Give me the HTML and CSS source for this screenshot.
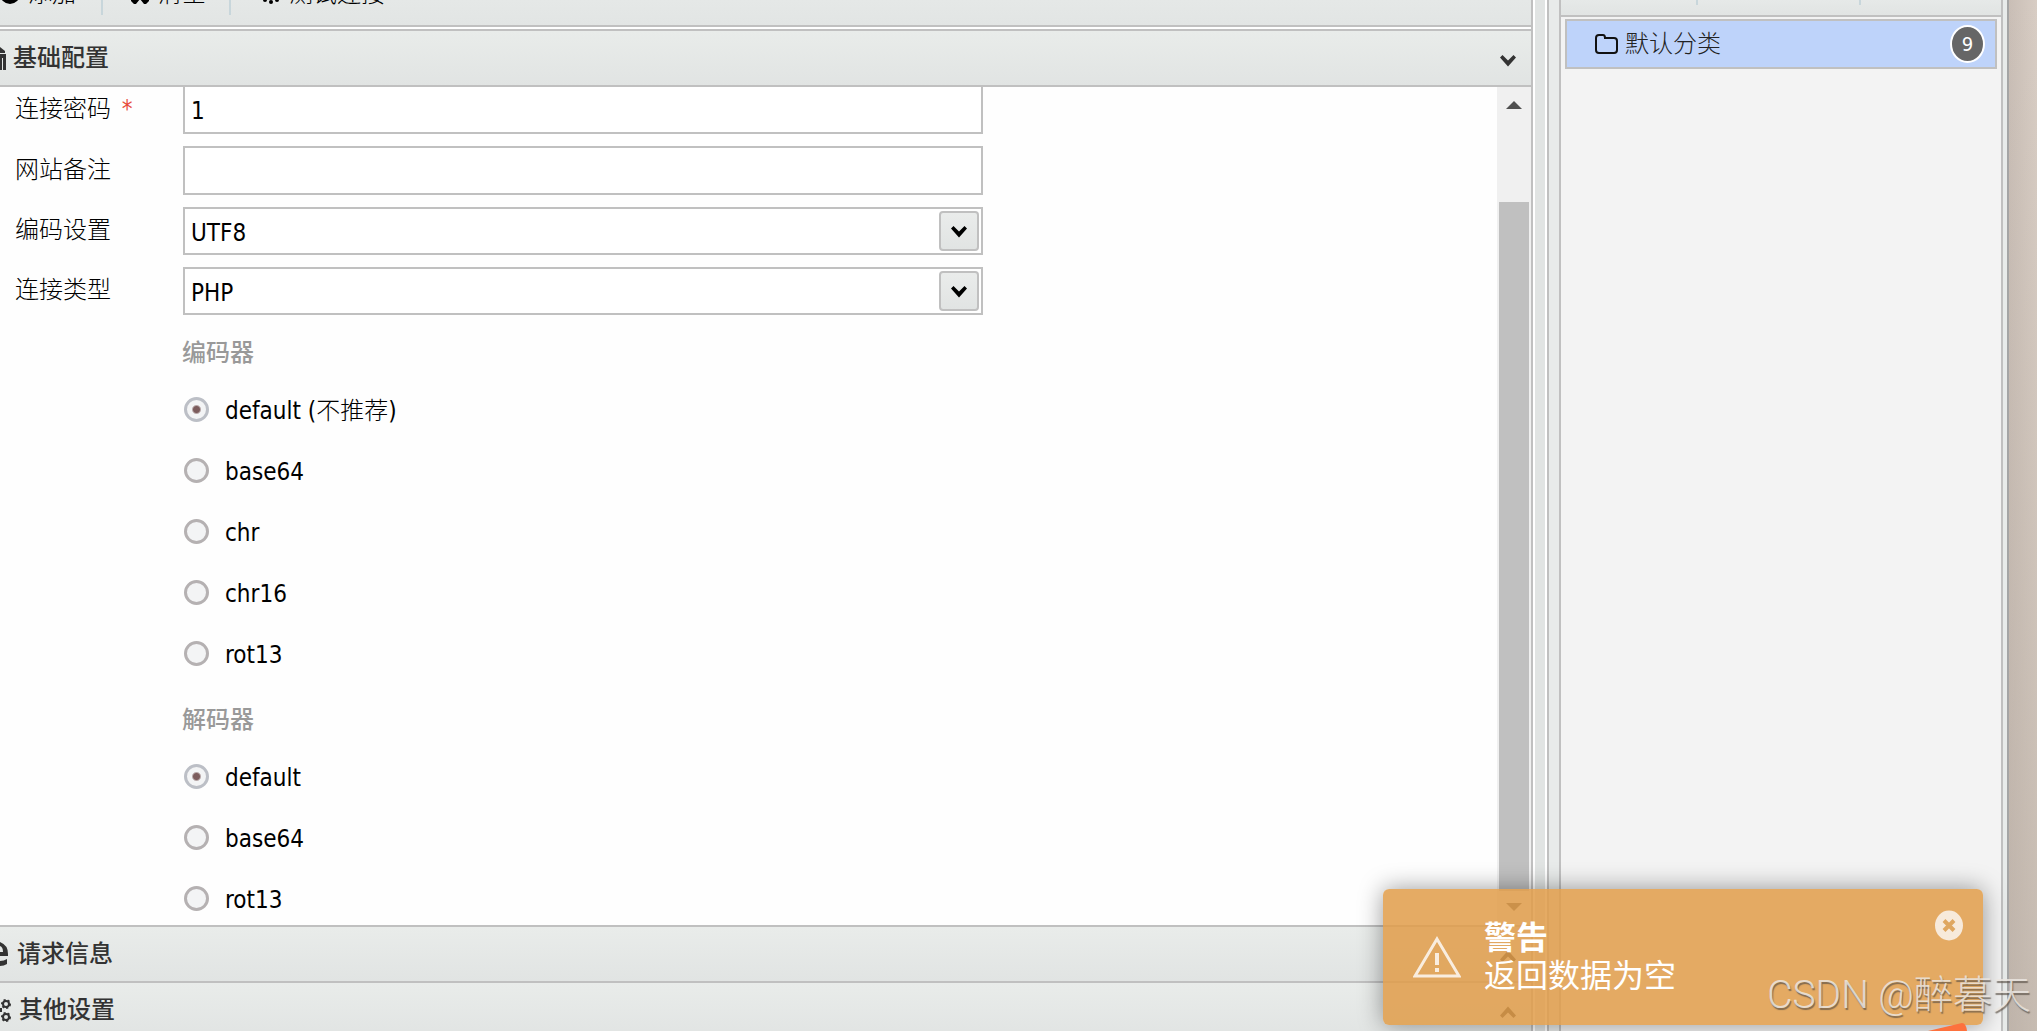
FILE: index.html
```html
<!DOCTYPE html>
<html lang="zh-CN">
<head>
<meta charset="utf-8">
<title>基础配置</title>
<link rel="stylesheet" href="styles.css">
</head>
<body>
<svg class="defs" aria-hidden="true">
  <symbol id="down" viewBox="0 0 18 13"><path d="M1 3.500 3.500 1 9 6.500 14.500 1 17 3.500 9 12.500z"/></symbol>
  <symbol id="up" viewBox="0 0 18 13"><path d="M1 9.500 3.500 12 9 6.500 14.500 12 17 9.500 9 .5z"/></symbol>
</svg>
<div class="window">
  <main class="main">
    <div class="toolbar">
      <button class="tool tool-add" type="button"><svg class="tool-icon" viewBox="0 0 20 20"><path fill-rule="evenodd" d="M10 0a10 10 0 1 0 0 20a10 10 0 0 0 0-20zM8 4h4v4h4v4h-4v4h-4v-4h-4v-4h4z"/></svg>添加</button>
      <span class="sep"></span>
      <button class="tool tool-clear" type="button"><svg class="tool-icon" viewBox="0 0 20 20"><path d="M3 1 10 7 17 1 20 4 14 10 19 15v2l-3 3h-2l-4-5-4 5H4l-3-3v-2l5-5L0 4z"/></svg>清空</button>
      <span class="sep"></span>
      <button class="tool tool-test" type="button"><svg class="tool-icon" viewBox="0 0 20 20"><circle cx="10" cy="2" r="2"/><circle cx="2" cy="10" r="2"/><circle cx="18" cy="10" r="2"/><circle cx="4" cy="16" r="2"/><circle cx="16" cy="16" r="2"/><circle cx="10" cy="18" r="2"/></svg>测试连接</button>
    </div>
    <section class="accordion">
      <button class="head" type="button"><svg class="head-icon" viewBox="0 0 6 24"><path d="M0 1 5 5v2H0zM0 8h6v16H3V12H2v12H0z"/></svg><span class="head-title">基础配置</span><svg class="chev"><use href="#down"/></svg></button>
      <div class="body">
        <form class="form">
          <div class="row"><label for="pwd">连接密码 <span class="star">*</span></label><input class="field" id="pwd" type="text" value="1"></div>
          <div class="row"><label for="note">网站备注</label><input class="field" id="note" type="text"></div>
          <div class="row"><label for="enc">编码设置</label><div class="combo"><select id="enc"><option>UTF8</option></select><span class="drop"><svg class="chev"><use href="#down"/></svg></span></div></div>
          <div class="row"><label for="type">连接类型</label><div class="combo"><select id="type"><option>PHP</option></select><span class="drop"><svg class="chev"><use href="#down"/></svg></span></div></div>
          <fieldset class="group">
            <legend>编码器</legend>
            <label class="option"><input type="radio" name="encoder" checked><span>default (不推荐)</span></label>
            <label class="option"><input type="radio" name="encoder"><span>base64</span></label>
            <label class="option"><input type="radio" name="encoder"><span>chr</span></label>
            <label class="option"><input type="radio" name="encoder"><span>chr16</span></label>
            <label class="option"><input type="radio" name="encoder"><span>rot13</span></label>
          </fieldset>
          <fieldset class="group">
            <legend>解码器</legend>
            <label class="option"><input type="radio" name="decoder" checked><span>default</span></label>
            <label class="option"><input type="radio" name="decoder"><span>base64</span></label>
            <label class="option"><input type="radio" name="decoder"><span>rot13</span></label>
          </fieldset>
        </form>
        <div class="scroll">
          <svg class="arrow" viewBox="0 0 16 8"><path d="M0 8 8 0l8 8z"/></svg>
          <span class="thumb"></span>
          <svg class="arrow" viewBox="0 0 16 8"><path d="M0 0h16L8 8z"/></svg>
        </div>
      </div>
      <button class="head" type="button"><svg class="head-icon wide" viewBox="0 0 8 24"><path d="M0 0Q8 3 8 12v2H0v-4h3Q3 5 0 4zM0 19q4 0 7-2v5q-3 2-7 2z"/></svg><span class="head-title">请求信息</span><svg class="chev"><use href="#up"/></svg></button>
      <button class="head" type="button"><svg class="head-icon gears" viewBox="0 0 11 24"><g fill="none" stroke="#333"><circle cx="6" cy="6" r="3" stroke-width="2"/><circle cx="6" cy="6" r="4" stroke-width="2" stroke-dasharray="2 2"/><circle cx="6" cy="19" r="3" stroke-width="2"/><circle cx="6" cy="19" r="4" stroke-width="2" stroke-dasharray="2 2"/></g><path d="M0 10h2v4H0z"/></svg><span class="head-title">其他设置</span><svg class="chev"><use href="#up"/></svg></button>
    </section>
  </main>
  <div class="splitter"></div>
  <div class="side-pane">
    <aside class="side">
      <div class="side-bar"><span class="side-sep"></span><span class="side-sep"></span></div>
      <a class="category" href="#"><svg class="folder" viewBox="0 0 24 20"><path d="M4 1h4q2 0 2 3h9q3 0 3 3v9q0 3-3 3H4q-3 0-3-3V4q0-3 3-3z"/></svg><span class="category-name">默认分类</span><span class="badge">9</span></a>
    </aside>
  </div>
</div>
<div class="toast" role="alert">
  <svg class="warn" viewBox="0 0 48 42"><path d="M24 3 46 40H2z" fill="none" stroke="#fff" stroke-width="3"/><path d="M22 17h4v12h-4zM22 32h4v4h-4z" fill="#fff"/></svg>
  <div class="toast-text"><strong>警告</strong><span>返回数据为空</span></div>
  <button class="close" type="button" aria-label="关闭"><svg viewBox="0 0 28 30"><ellipse cx="14" cy="15" rx="14" ry="15"/><path d="M9 10 19 20M19 10 9 20"/></svg></button>
</div>
<svg class="corner" viewBox="0 0 40 8"><path d="M0 8 34 0q4 0 5 8z"/></svg>
<div class="mark">CSDN @醉暮天</div>
</body>
</html>
```
FILE: styles.css
```css
* { box-sizing: border-box; }
body {
  margin: 0;
  height: 100vh;
  overflow: hidden;
  position: relative;
  background: linear-gradient(#d8cdc400, #b5aa9f80) right / 28px 100% no-repeat, linear-gradient(90deg, #c9beb6 0, #d8cdc4 100%) right / 28px 100% no-repeat;
  font: 24px/32px "DejaVu Sans Condensed", "Noto Sans CJK SC", sans-serif;
  color: #000;
}
button, input, select { font: inherit; color: inherit; margin: 0; }
.defs { display: none; }
.window {
  height: 100%;
  margin-right: 28px;
  display: flex;
  background: #e8ebea;
  border-right: 2px solid #a5a5a5;
}
.main { flex: 1; min-width: 0; display: flex; flex-direction: column; background: #fefefe; border-right: 2px solid #c0c0c0; }
.toolbar {
  height: 27px;
  flex: none;
  display: flex;
  align-items: flex-start;
  overflow: hidden;
  border-bottom: 2px solid #c0c0c0;
  background: linear-gradient(#e5e8e7, #e2e5e4);
}
.tool { display: flex; align-items: center; height: 32px; margin-top: -22px; padding: 0; border: 0; background: none; white-space: nowrap; font-weight: 300; }
.tool-icon { width: 20px; height: 20px; margin-right: 8px; flex: none; }
.tool-add { width: 101px; }
.tool-clear { width: 126px; padding-left: 27px; }
.tool-test { padding-left: 30px; }
.sep { width: 2px; height: 15px; background: #c8d6db; }
.accordion { flex: 1; min-height: 0; display: flex; flex-direction: column; margin-top: 2px; border-top: 2px solid #c0c0c0; overflow: hidden; }
.head {
  height: 56px;
  flex: none;
  display: flex;
  align-items: center;
  padding: 0 14px 0 0;
  border: 0;
  border-bottom: 2px solid #c0c0c0;
  background: linear-gradient(#e9ecea, #e1e4e3);
  color: #333;
  text-align: left;
  font-weight: 500;
}
.head-icon { width: 6px; height: 24px; margin-right: 7px; fill: #333; flex: none; }
.head-icon.wide { width: 8px; margin-right: 9px; }
.head-icon.gears { width: 11px; margin-right: 8px; }
.head-title { flex: 1; }
.chev { width: 18px; height: 13px; fill: currentColor; }
.head .chev { margin-top: 4px; }
.body { height: 840px; flex: none; display: flex; border-bottom: 2px solid #c0c0c0; overflow: hidden; }
.form { flex: 1; min-width: 0; margin-top: -2px; display: flex; flex-direction: column; gap: 12px; }
.row { display: flex; align-items: center; }
.row > label { width: 183px; padding: 0 0 2px 15px; font-weight: 300; }
.star { color: #e74c3c; margin-left: 4px; }
.field { width: 800px; height: 49px; padding: 2px 6px 0; border: 2px solid #c0c0c0; background: #fff; }
.combo { width: 800px; height: 48px; display: flex; align-items: center; padding-right: 2px; border: 2px solid #c0c0c0; background: #fff; }
.combo select { flex: 1; height: 44px; padding: 3px 6px 0; border: 0; appearance: none; background: none; }
.drop { width: 40px; height: 40px; display: flex; align-items: center; justify-content: center; border: 2px solid #c0c0c0; border-radius: 4px; background: linear-gradient(#eaeceb, #e1e4e3); }
.group { margin: 0 0 -2px 182px; padding: 0; border: 0; }
.group + .group { margin-bottom: 0; }
.group legend { height: 52px; padding: 10px 0; color: #999; font-weight: 500; }
.option { display: flex; align-items: center; height: 61px; font-weight: 300; }
.option span { padding-top: 3px; }
.option input {
  appearance: none;
  width: 25px;
  height: 25px;
  margin: 0 16px 0 2px;
  border: 3px solid #b5b1b2;
  border-radius: 50%;
  background: #f3f4f5;
}
.option input:checked { background: radial-gradient(circle, #7c5c5c 0 3px, #f3f4f5 5px); border-color: #bcbfc6; }
.scroll { width: 34px; padding: 14px 2px; display: flex; flex-direction: column; align-items: center; background: #f0f0f0; }
.arrow { width: 16px; height: 8px; fill: #505050; flex: none; }
.thumb { width: 30px; flex: 1; margin: 93px 0 12px; background: #c0c0c0; }
.splitter { width: 14px; background: #e1e4e3; border: solid #fff; border-width: 0 2px; }
.side-pane { width: 460px; padding: 0 4px 0 10px; border-left: 2px solid #c0c0c0; }
.side { height: 100%; border: solid #c0c0c0; border-width: 0 2px; background: #f3f3f3; }
.side-bar { height: 17px; display: flex; border-bottom: 2px solid #c0c0c0; background: linear-gradient(#e6e9e8, #e1e4e3); }
.side-sep { width: 2px; height: 5px; margin-left: 135px; background: #c8d6db; }
.side-sep + .side-sep { margin-left: 161px; }
.category { display: flex; align-items: center; height: 50px; margin: 2px 4px; padding: 0 10px 0 28px; border: 2px solid #c0c0c0; background: #bed3fa; color: #222; text-decoration: none; font-weight: 300; }
.folder { width: 24px; height: 20px; margin-right: 6px; fill: none; stroke: #111; stroke-width: 2; }
.category-name { flex: 1; }
.badge { width: 35px; height: 38px; border: 2px solid #fff; border-radius: 50%; background: #666; color: #fff; font-size: 20px; font-weight: 400; line-height: 34px; text-align: center; }
.toast {
  position: absolute;
  right: 54px;
  bottom: 6px;
  width: 600px;
  height: 136px;
  display: flex;
  align-items: center;
  padding: 0 20px 0 30px;
  border-radius: 6px;
  background: rgba(224, 156, 73, .85);
  box-shadow: 0 0 24px rgba(0, 0, 0, .4);
  color: #fff;
}
.warn { width: 48px; height: 42px; margin-right: 23px; opacity: .8; }
.toast-text { flex: 1; display: flex; flex-direction: column; font-size: 32px; line-height: 38px; font-weight: 400; }
.close { align-self: flex-start; margin-top: 21px; width: 28px; height: 31px; padding: 0; border: 0; background: none; }
.close svg { display: block; width: 28px; height: 31px; fill: #f7eadb; stroke: #dfa760; }
.close ellipse { stroke: none; }
.close path { stroke-width: 4; }
.corner { position: absolute; right: 69px; bottom: 0; width: 40px; height: 8px; fill: #fd713d; }
.mark { position: absolute; right: 6px; bottom: 10px; font: 300 39px/52px Roboto, "Noto Sans CJK SC", sans-serif; color: rgba(235, 230, 225, .85); text-shadow: 1px 2px 1px rgba(90, 80, 70, .7); white-space: nowrap; }
```
